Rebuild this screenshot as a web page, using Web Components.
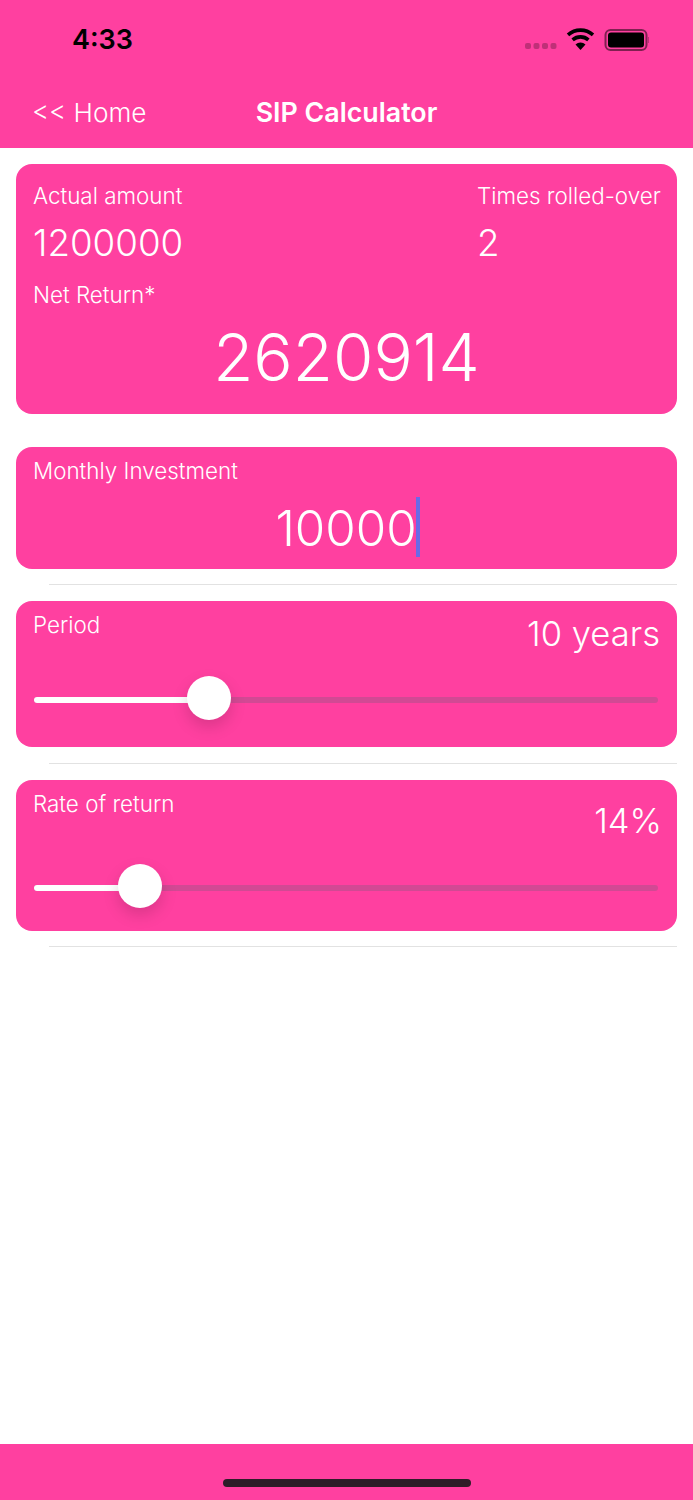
<!DOCTYPE html>
<html>
<head>
<meta charset="utf-8">
<title>SIP Calculator</title>
<style>
  html, body { margin: 0; height: 100%; }
  body { font-family: Inter, "Liberation Sans", sans-serif; color: #fff; background: #fff; }
  sip-app { height: 1500px; }
</style>
</head>
<body>
<sip-app>
  <sip-header title="SIP Calculator" back="&lt;&lt; Home"></sip-header>
  <sip-summary amount="1200000" times="2" net="2620914"></sip-summary>
  <sip-input label="Monthly Investment" value="10000"></sip-input>
  <sip-slider label="Period" value="10 years" pos="175" h="146" rh="76" vtop="10" vend="0" ltop="10" gap="16"></sip-slider>
  <sip-slider label="Rate of return" value="14%" pos="106" h="151" rh="85" vtop="18" vend="-2" ltop="10" gap="15"></sip-slider>
</sip-app>
<script>
class SipApp extends HTMLElement {
  constructor() {
    super();
    this.attachShadow({ mode: 'open' }).innerHTML = `
      <style>
        :host { display: flex; flex-direction: column; }
        main { flex: 1; }
        footer { height: 56px; background: #ff40a0; display: flex; justify-content: center; }
        .bar { width: 248px; height: 8px; margin-top: 35px; border-radius: 4px; background: #2e1c28; }
      </style>
      <slot name="top"></slot>
      <main><slot></slot></main>
      <footer><div class="bar"></div></footer>`;
  }
}

class SipHeader extends HTMLElement {
  constructor() {
    super();
    this.attachShadow({ mode: 'open' });
  }
  connectedCallback() {
    this.shadowRoot.innerHTML = `
      <style>
        :host { display: block; height: 148px; background: #ff40a0; color: #fff; }
        .status { height: 80px; display: flex; align-items: flex-start; justify-content: space-between; }
        .time { margin: 23px 0 0 72px; font-size: 27px; line-height: 34px; font-weight: 600; color: #000; }
        .icons { display: flex; margin: 28px 44px 0 0; }
        .nav { height: 64px; display: grid; grid-template-columns: 1fr auto 1fr; align-items: center; padding: 0 33px; }
        .back { font-size: 26.200px; font-weight: 300; white-space: nowrap; margin-left: -1px; }
        .title { font-size: 26.800px; font-weight: 600; }
      </style>
      <div class="status">
        <div class="time">4:33</div>
        <svg class="icons" width="124" height="26" viewBox="0 0 124 26">
          <g fill="#000" fill-opacity=".25">
            <rect x="0" y="15" width="6" height="6" rx="2"/>
            <rect x="8.500" y="15" width="6" height="6" rx="2"/>
            <rect x="17" y="15" width="6" height="6" rx="2"/>
            <rect x="25.500" y="15" width="6" height="6" rx="2"/>
          </g>
          <g fill="none" stroke="#000" stroke-width="3.600">
            <path d="M43 6.800a19 19 0 0 1 25 0"/>
            <path d="M47.600 11.800a12 12 0 0 1 15.800 0"/>
          </g>
          <path d="M50.500 16.500a7.500 7.500 0 0 1 10 0L55.500 22z" fill="#000"/>
          <rect x="80.500" y="2" width="41" height="20" rx="5" fill="none" stroke="#000" stroke-opacity=".5" stroke-width="2"/>
          <rect x="83" y="4.500" width="36" height="15" rx="3" fill="#000"/>
          <path d="M123.500 9a3 3 0 0 1 0 6z" fill="#000" fill-opacity=".5"/>
        </svg>
      </div>
      <div class="nav">
        <div class="back">${this.getAttribute('back')}</div>
        <div class="title">${this.getAttribute('title')}</div>
        <div></div>
      </div>`;
  }
}

class SipCard extends HTMLElement {
  constructor() {
    super();
    this.attachShadow({ mode: 'open' }).innerHTML = `
      <style>
        :host { display: block; background: #ff40a0; border-radius: 16px; margin: 0 16px; color: #fff; box-sizing: border-box; padding: 0 17px; position: relative; }
      </style>
      <slot></slot>`;
  }
}

class SipSummary extends HTMLElement {
  constructor() {
    super();
    this.attachShadow({ mode: 'open' });
  }
  connectedCallback() {
    this.shadowRoot.innerHTML = `
      <style>
        :host { display: block; padding-top: 16px; }
        sip-card { height: 250px; }
        .row { display: flex; justify-content: space-between; padding-top: 18px; }
        .lbl { font-size: 22.400px; line-height: 28px; white-space: nowrap; font-weight: 350; }
        .val { font-size: 36.700px; line-height: 44px; margin-top: 11px; font-weight: 300; }
        .net { font-size: 65.500px; line-height: 78px; text-align: center; margin-top: 10px; font-weight: 300; }
        .right { width: 183px; }
      </style>
      <sip-card>
        <div class="row">
          <div><div class="lbl">Actual amount</div><div class="val">${this.getAttribute('amount')}</div></div>
          <div class="right"><div class="lbl">Times rolled-over</div><div class="val">${this.getAttribute('times')}</div></div>
        </div>
        <div class="lbl" style="margin-top:16px">Net Return*</div>
        <div class="net">${this.getAttribute('net')}</div>
      </sip-card>`;
  }
}

class SipInput extends HTMLElement {
  constructor() {
    super();
    this.attachShadow({ mode: 'open' });
  }
  connectedCallback() {
    this.shadowRoot.innerHTML = `
      <style>
        :host { display: block; padding-top: 33px; }
        sip-card { height: 122px; padding-top: 10px; }
        .lbl { font-size: 22.400px; line-height: 28px; font-weight: 350; }
        .field { display: flex; justify-content: center; align-items: center; height: 60px; margin-top: 12px; }
        .val { font-size: 49.300px; line-height: 60px; margin-top: 2px; font-weight: 300; }
        .caret { width: 4px; height: 60px; background: #6a6ae8; margin: 0 -2px 0 -1px; }
        hr { border: 0; height: 1px; background: #e2e2e2; margin: 15px 16px 0 49px; }
      </style>
      <sip-card>
        <div class="lbl">${this.getAttribute('label')}</div>
        <div class="field"><span class="val">${this.getAttribute('value')}</span><span class="caret"></span></div>
      </sip-card>
      <hr>`;
  }
}

class SipSlider extends HTMLElement {
  constructor() {
    super();
    this.attachShadow({ mode: 'open' });
  }
  connectedCallback() {
    const pos = this.getAttribute('pos');
    this.shadowRoot.innerHTML = `
      <style>
        :host { display: block; padding-top: 16px; }
        sip-card { height: ${this.getAttribute('h')}px; display: block; }
        .row { display: flex; justify-content: space-between; align-items: flex-start; height: ${this.getAttribute('rh')}px; }
        .lbl { font-size: 22.400px; line-height: 28px; margin-top: ${this.getAttribute('ltop')}px; font-weight: 350; }
        .val { font-size: 34.600px; line-height: 44px; margin-top: ${this.getAttribute('vtop')}px; margin-right: ${this.getAttribute('vend')}px; font-weight: 300; }
        .track { position: relative; height: 6px; margin: 20px 2px 0 1px; background: rgba(180, 80, 140, .6); border-radius: 3px; }
        .fill { width: ${pos}px; height: 100%; background: #fff; border-radius: 3px; }
        .thumb { position: absolute; left: ${pos - 22}px; top: -21px; width: 44px; height: 44px; border-radius: 50%; background: #fff; box-shadow: 0 7px 16px rgba(0, 0, 0, .15); }
        hr { border: 0; height: 1px; background: #e2e2e2; margin: ${this.getAttribute('gap')}px 16px 0 49px; }
      </style>
      <sip-card>
        <div class="row"><div class="lbl">${this.getAttribute('label')}</div><div class="val">${this.getAttribute('value')}</div></div>
        <div class="track"><div class="fill"></div><div class="thumb"></div></div>
      </sip-card>
      <hr>`;
  }
}

customElements.define('sip-app', SipApp);
customElements.define('sip-header', SipHeader);
customElements.define('sip-card', SipCard);
customElements.define('sip-summary', SipSummary);
customElements.define('sip-input', SipInput);
customElements.define('sip-slider', SipSlider);
document.querySelector('sip-header').slot = 'top';
</script>
</body>
</html>
